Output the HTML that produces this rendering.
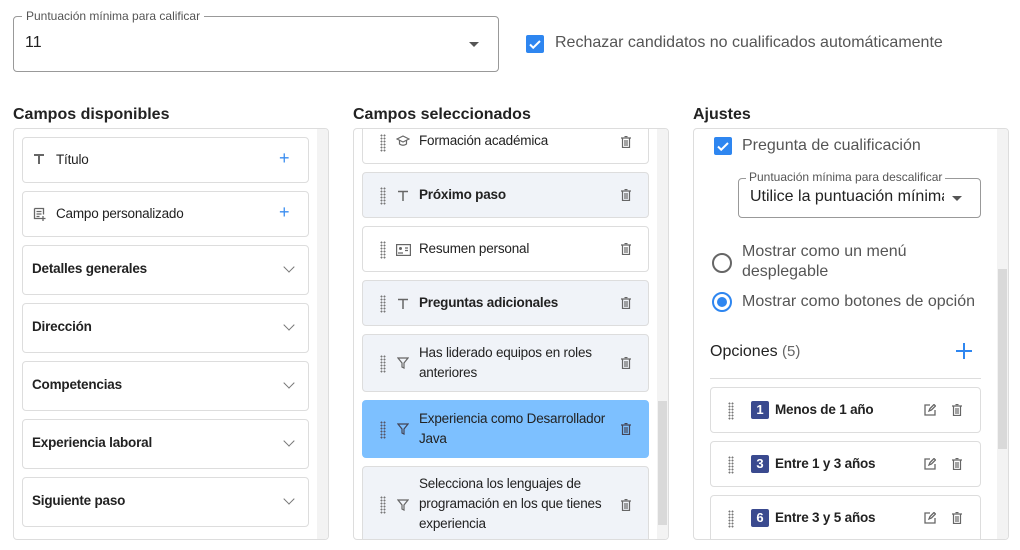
<!DOCTYPE html>
<html><head><meta charset="utf-8"><style>
*{box-sizing:border-box;margin:0;padding:0}
body{width:1020px;height:550px;background:#fff;font-family:"Liberation Sans",sans-serif;position:relative;overflow:hidden;color:#222}
.a{position:absolute}
.h{font-size:16px;font-weight:bold;color:#222;top:106px}
.panel{position:absolute;top:128px;height:412px;border:1px solid #ddd;border-radius:4px;overflow:hidden;background:#fff}
.sb{position:absolute;right:0;top:0;width:11px;height:100%;background:#f3f3f3}
.thumb{position:absolute;right:1px;width:9px;background:#d9d9d9}
.item{position:absolute;border:1px solid #ddd;border-radius:4px;background:#fff}
.t{position:absolute;font-size:13.5px;letter-spacing:-0.2px;color:#222;line-height:20px}
.b{font-weight:bold;font-size:13.5px;letter-spacing:-0.2px}
.gray{background:#f0f3f8}
.dots{position:absolute;width:6px;height:18px;background-image:radial-gradient(circle,#777 0.9px,transparent 1.1px);background-size:3px 3px}
.chev{position:absolute;right:15px;width:8px;height:8px;border-right:1.6px solid #777;border-bottom:1.6px solid #777;transform:rotate(45deg)}
.plus{position:absolute;color:#3b8ef0;font-size:18px}
.badge{position:absolute;width:18px;height:18px;background:#3a4a8f;color:#fff;font-size:13px;font-weight:bold;text-align:center;line-height:18px;border-radius:2px}
</style></head><body>

<div class="a" style="left:13px;top:16px;width:486px;height:56px;border:1px solid #999;border-radius:4px"></div>
<div class="a" style="left:22px;top:9px;padding:0 4px;background:#fff;font-size:12px;color:#555">Puntuación mínima para calificar</div>
<div class="a" style="left:25px;top:34px;font-size:16px;color:#222">11</div>
<div class="a" style="left:469px;top:42px;border-left:5px solid transparent;border-right:5px solid transparent;border-top:5px solid #555"></div>
<div class="a" style="left:526px;top:35px;width:18px;height:18px;background:#2e86f0;border-radius:2px"><svg width="18" height="18"><path d="M4 9.5l3.2 3.2L14 6" stroke="#fff" stroke-width="2" fill="none"/></svg></div>
<div class="a" style="left:555px;top:34px;font-size:16px;color:#555">Rechazar candidatos no cualificados automáticamente</div>

<div class="a h" style="left:13px">Campos disponibles</div>
<div class="a h" style="left:353px">Campos seleccionados</div>
<div class="a h" style="left:693px">Ajustes</div>

<div class="panel" style="left:13px;width:316px">
 <div class="sb"></div>
 <div class="item" style="left:8px;top:8px;width:287px;height:46px">
  <svg class="a" style="left:10px;top:15px" width="12" height="12"><path d="M1 2h10M6 2v9" stroke="#666" stroke-width="2" fill="none"/></svg>
  <div class="t" style="left:33px;top:12px">Título</div><div class="plus" style="left:256px;top:10px">+</div></div>
 <div class="item" style="left:8px;top:62px;width:287px;height:46px">
  <svg class="a" style="left:10px;top:15px" width="14" height="14"><path d="M1.5 1.5h9v6M1.5 1.5v10h6M3.5 4.5h5M3.5 7h5M3.5 9.5h3M10 9v5M7.5 11.5h5" stroke="#666" stroke-width="1.3" fill="none"/></svg>
  <div class="t" style="left:33px;top:12px">Campo personalizado</div><div class="plus" style="left:256px;top:10px">+</div></div>
 <div class="item" style="left:8px;top:116px;width:287px;height:50px"><div class="t b" style="left:9px;top:13px">Detalles generales</div><div class="chev" style="top:17px"></div></div>
 <div class="item" style="left:8px;top:174px;width:287px;height:50px"><div class="t b" style="left:9px;top:13px">Dirección</div><div class="chev" style="top:17px"></div></div>
 <div class="item" style="left:8px;top:232px;width:287px;height:50px"><div class="t b" style="left:9px;top:13px">Competencias</div><div class="chev" style="top:17px"></div></div>
 <div class="item" style="left:8px;top:290px;width:287px;height:50px"><div class="t b" style="left:9px;top:13px">Experiencia laboral</div><div class="chev" style="top:17px"></div></div>
 <div class="item" style="left:8px;top:348px;width:287px;height:50px"><div class="t b" style="left:9px;top:13px">Siguiente paso</div><div class="chev" style="top:17px"></div></div>
</div>

<div class="panel" style="left:353px;width:316px">
 <div class="sb"><div class="thumb" style="top:272px;height:124px"></div></div>
 <div class="item" style="left:8px;top:-11px;width:287px;height:46px"><div class="dots" style="left:17px;top:15px"></div>
  <svg class="a" style="left:33px;top:16px" width="14" height="12"><path d="M1 4l6-3 6 3-6 3zM3.5 5.5v3.5q3.5 2.5 7 0v-3.5" stroke="#666" stroke-width="1.2" fill="none"/></svg>
  <div class="t" style="left:56px;top:12px">Formación académica</div>
  <svg class="a" style="left:258px;top:17px" width="10" height="12"><path d="M0 2h10M3.5 0.5h3M1.5 2v9.5h7V2M4 4v6M6 4v6" stroke="#666" stroke-width="1.2" fill="none"/></svg></div>
 <div class="item gray" style="left:8px;top:43px;width:287px;height:46px"><div class="dots" style="left:17px;top:14px"></div>
  <svg class="a" style="left:34px;top:17px" width="12" height="12"><path d="M1 1.5h10M6 1.5v9.5" stroke="#666" stroke-width="1.5" fill="none"/></svg>
  <div class="t b" style="left:56px;top:12px">Próximo paso</div>
  <svg class="a" style="left:258px;top:16px" width="10" height="12"><path d="M0 2h10M3.5 0.5h3M1.5 2v9.5h7V2M4 4v6M6 4v6" stroke="#666" stroke-width="1.2" fill="none"/></svg></div>
 <div class="item" style="left:8px;top:97px;width:287px;height:46px"><div class="dots" style="left:17px;top:14px"></div>
  <svg class="a" style="left:33px;top:17px" width="15" height="12"><rect x="0.6" y="0.6" width="13.8" height="10.8" stroke="#666" stroke-width="1.2" fill="none"/><circle cx="4.5" cy="4.5" r="1.5" fill="#666"/><path d="M2 9h5M9 4h3M9 6.5h3" stroke="#666" stroke-width="1.2"/></svg>
  <div class="t" style="left:56px;top:12px">Resumen personal</div>
  <svg class="a" style="left:258px;top:16px" width="10" height="12"><path d="M0 2h10M3.5 0.5h3M1.5 2v9.5h7V2M4 4v6M6 4v6" stroke="#666" stroke-width="1.2" fill="none"/></svg></div>
 <div class="item gray" style="left:8px;top:151px;width:287px;height:46px"><div class="dots" style="left:17px;top:14px"></div>
  <svg class="a" style="left:34px;top:17px" width="12" height="12"><path d="M1 1.5h10M6 1.5v9.5" stroke="#666" stroke-width="1.5" fill="none"/></svg>
  <div class="t b" style="left:56px;top:12px">Preguntas adicionales</div>
  <svg class="a" style="left:258px;top:16px" width="10" height="12"><path d="M0 2h10M3.5 0.5h3M1.5 2v9.5h7V2M4 4v6M6 4v6" stroke="#666" stroke-width="1.2" fill="none"/></svg></div>
 <div class="item gray" style="left:8px;top:205px;width:287px;height:58px"><div class="dots" style="left:17px;top:20px"></div>
  <svg class="a" style="left:34px;top:22px" width="12" height="12"><path d="M1 1h10L7 6v5L5 10V6z" stroke="#666" stroke-width="1.2" fill="none"/></svg>
  <div class="t" style="left:56px;top:8px">Has liderado equipos en roles<br>anteriores</div>
  <svg class="a" style="left:258px;top:22px" width="10" height="12"><path d="M0 2h10M3.5 0.5h3M1.5 2v9.5h7V2M4 4v6M6 4v6" stroke="#666" stroke-width="1.2" fill="none"/></svg></div>
 <div class="item" style="left:8px;top:271px;width:287px;height:58px;background:#7dc0ff;border-color:#7dc0ff"><div class="dots" style="left:17px;top:20px;background-image:radial-gradient(circle,#556 0.9px,transparent 1.1px)"></div>
  <svg class="a" style="left:34px;top:22px" width="12" height="12"><path d="M1 1h10L7 6v5L5 10V6z" stroke="#445" stroke-width="1.2" fill="none"/></svg>
  <div class="t" style="left:56px;top:8px">Experiencia como Desarrollador<br>Java</div>
  <svg class="a" style="left:258px;top:22px" width="10" height="12"><path d="M0 2h10M3.5 0.5h3M1.5 2v9.5h7V2M4 4v6M6 4v6" stroke="#445" stroke-width="1.2" fill="none"/></svg></div>
 <div class="item gray" style="left:8px;top:337px;width:287px;height:90px"><div class="dots" style="left:17px;top:29px"></div>
  <svg class="a" style="left:34px;top:32px" width="12" height="12"><path d="M1 1h10L7 6v5L5 10V6z" stroke="#666" stroke-width="1.2" fill="none"/></svg>
  <div class="t" style="left:56px;top:7px">Selecciona los lenguajes de<br>programación en los que tienes<br>experiencia</div>
  <svg class="a" style="left:258px;top:32px" width="10" height="12"><path d="M0 2h10M3.5 0.5h3M1.5 2v9.5h7V2M4 4v6M6 4v6" stroke="#666" stroke-width="1.2" fill="none"/></svg></div>
</div>

<div class="panel" style="left:693px;width:316px">
 <div class="sb"><div class="thumb" style="top:140px;height:180px"></div></div>
 <div class="a" style="left:20px;top:8px;width:18px;height:18px;background:#2e86f0;border-radius:2px"><svg width="18" height="18"><path d="M4 9.5l3.2 3.2L14 6" stroke="#fff" stroke-width="2" fill="none"/></svg></div>
 <div class="a" style="left:48px;top:8px;font-size:16px;color:#555">Pregunta de cualificación</div>
 <div class="a" style="left:44px;top:49px;width:243px;height:40px;border:1px solid #999;border-radius:4px"></div>
 <div class="a" style="left:52px;top:41px;padding:0 3px;background:#fff;font-size:12px;color:#555">Puntuación mínima para descalificar</div>
 <div class="a" style="left:56px;top:59px;width:194px;overflow:hidden;white-space:nowrap;font-size:16px;color:#222">Utilice la puntuación mínima</div>
 <div class="a" style="left:258px;top:67px;border-left:5px solid transparent;border-right:5px solid transparent;border-top:5px solid #555"></div>
 <div class="a" style="left:18px;top:124px;width:20px;height:20px;border:2px solid #666;border-radius:50%"></div>
 <div class="a" style="left:48px;top:113px;font-size:16px;color:#555;line-height:20px">Mostrar como un menú<br>desplegable</div>
 <div class="a" style="left:18px;top:163px;width:20px;height:20px;border:2px solid #2e86f0;border-radius:50%"><div class="a" style="left:3px;top:3px;width:10px;height:10px;border-radius:50%;background:#2e86f0"></div></div>
 <div class="a" style="left:48px;top:164px;font-size:16px;color:#555">Mostrar como botones de opción</div>
 <div class="a" style="left:16px;top:214px;font-size:16px;color:#222">Opciones <span style="color:#666;font-size:15px">(5)</span></div>
 <div class="a" style="left:262px;top:214px;width:16px;height:16px"><div class="a" style="left:7px;top:0;width:2px;height:16px;background:#2e86f0"></div><div class="a" style="left:0;top:7px;width:16px;height:2px;background:#2e86f0"></div></div>
 <div class="a" style="left:16px;top:249px;width:271px;height:1px;background:#ddd"></div>
 <div class="item" style="left:16px;top:258px;width:271px;height:46px"><div class="dots" style="left:17px;top:14px"></div><div class="badge" style="left:40px;top:13px">1</div><div class="t b" style="left:64px;top:12px">Menos de 1 año</div>
  <svg class="a" style="left:213px;top:16px" width="12" height="12"><path d="M6 1H1v10h10V6M5 7l1-2.5L10 0.5l1.5 1.5-4 4z" stroke="#666" stroke-width="1.3" fill="none"/></svg>
  <svg class="a" style="left:241px;top:16px" width="10" height="12"><path d="M0 2h10M3.5 0.5h3M1.5 2v9.5h7V2M4 4v6M6 4v6" stroke="#666" stroke-width="1.2" fill="none"/></svg></div>
 <div class="item" style="left:16px;top:312px;width:271px;height:46px"><div class="dots" style="left:17px;top:14px"></div><div class="badge" style="left:40px;top:13px">3</div><div class="t b" style="left:64px;top:12px">Entre 1 y 3 años</div>
  <svg class="a" style="left:213px;top:16px" width="12" height="12"><path d="M6 1H1v10h10V6M5 7l1-2.5L10 0.5l1.5 1.5-4 4z" stroke="#666" stroke-width="1.3" fill="none"/></svg>
  <svg class="a" style="left:241px;top:16px" width="10" height="12"><path d="M0 2h10M3.5 0.5h3M1.5 2v9.5h7V2M4 4v6M6 4v6" stroke="#666" stroke-width="1.2" fill="none"/></svg></div>
 <div class="item" style="left:16px;top:366px;width:271px;height:60px"><div class="dots" style="left:17px;top:14px"></div><div class="badge" style="left:40px;top:13px">6</div><div class="t b" style="left:64px;top:12px">Entre 3 y 5 años</div>
  <svg class="a" style="left:213px;top:16px" width="12" height="12"><path d="M6 1H1v10h10V6M5 7l1-2.5L10 0.5l1.5 1.5-4 4z" stroke="#666" stroke-width="1.3" fill="none"/></svg>
  <svg class="a" style="left:241px;top:16px" width="10" height="12"><path d="M0 2h10M3.5 0.5h3M1.5 2v9.5h7V2M4 4v6M6 4v6" stroke="#666" stroke-width="1.2" fill="none"/></svg></div>
</div>
</body></html>
